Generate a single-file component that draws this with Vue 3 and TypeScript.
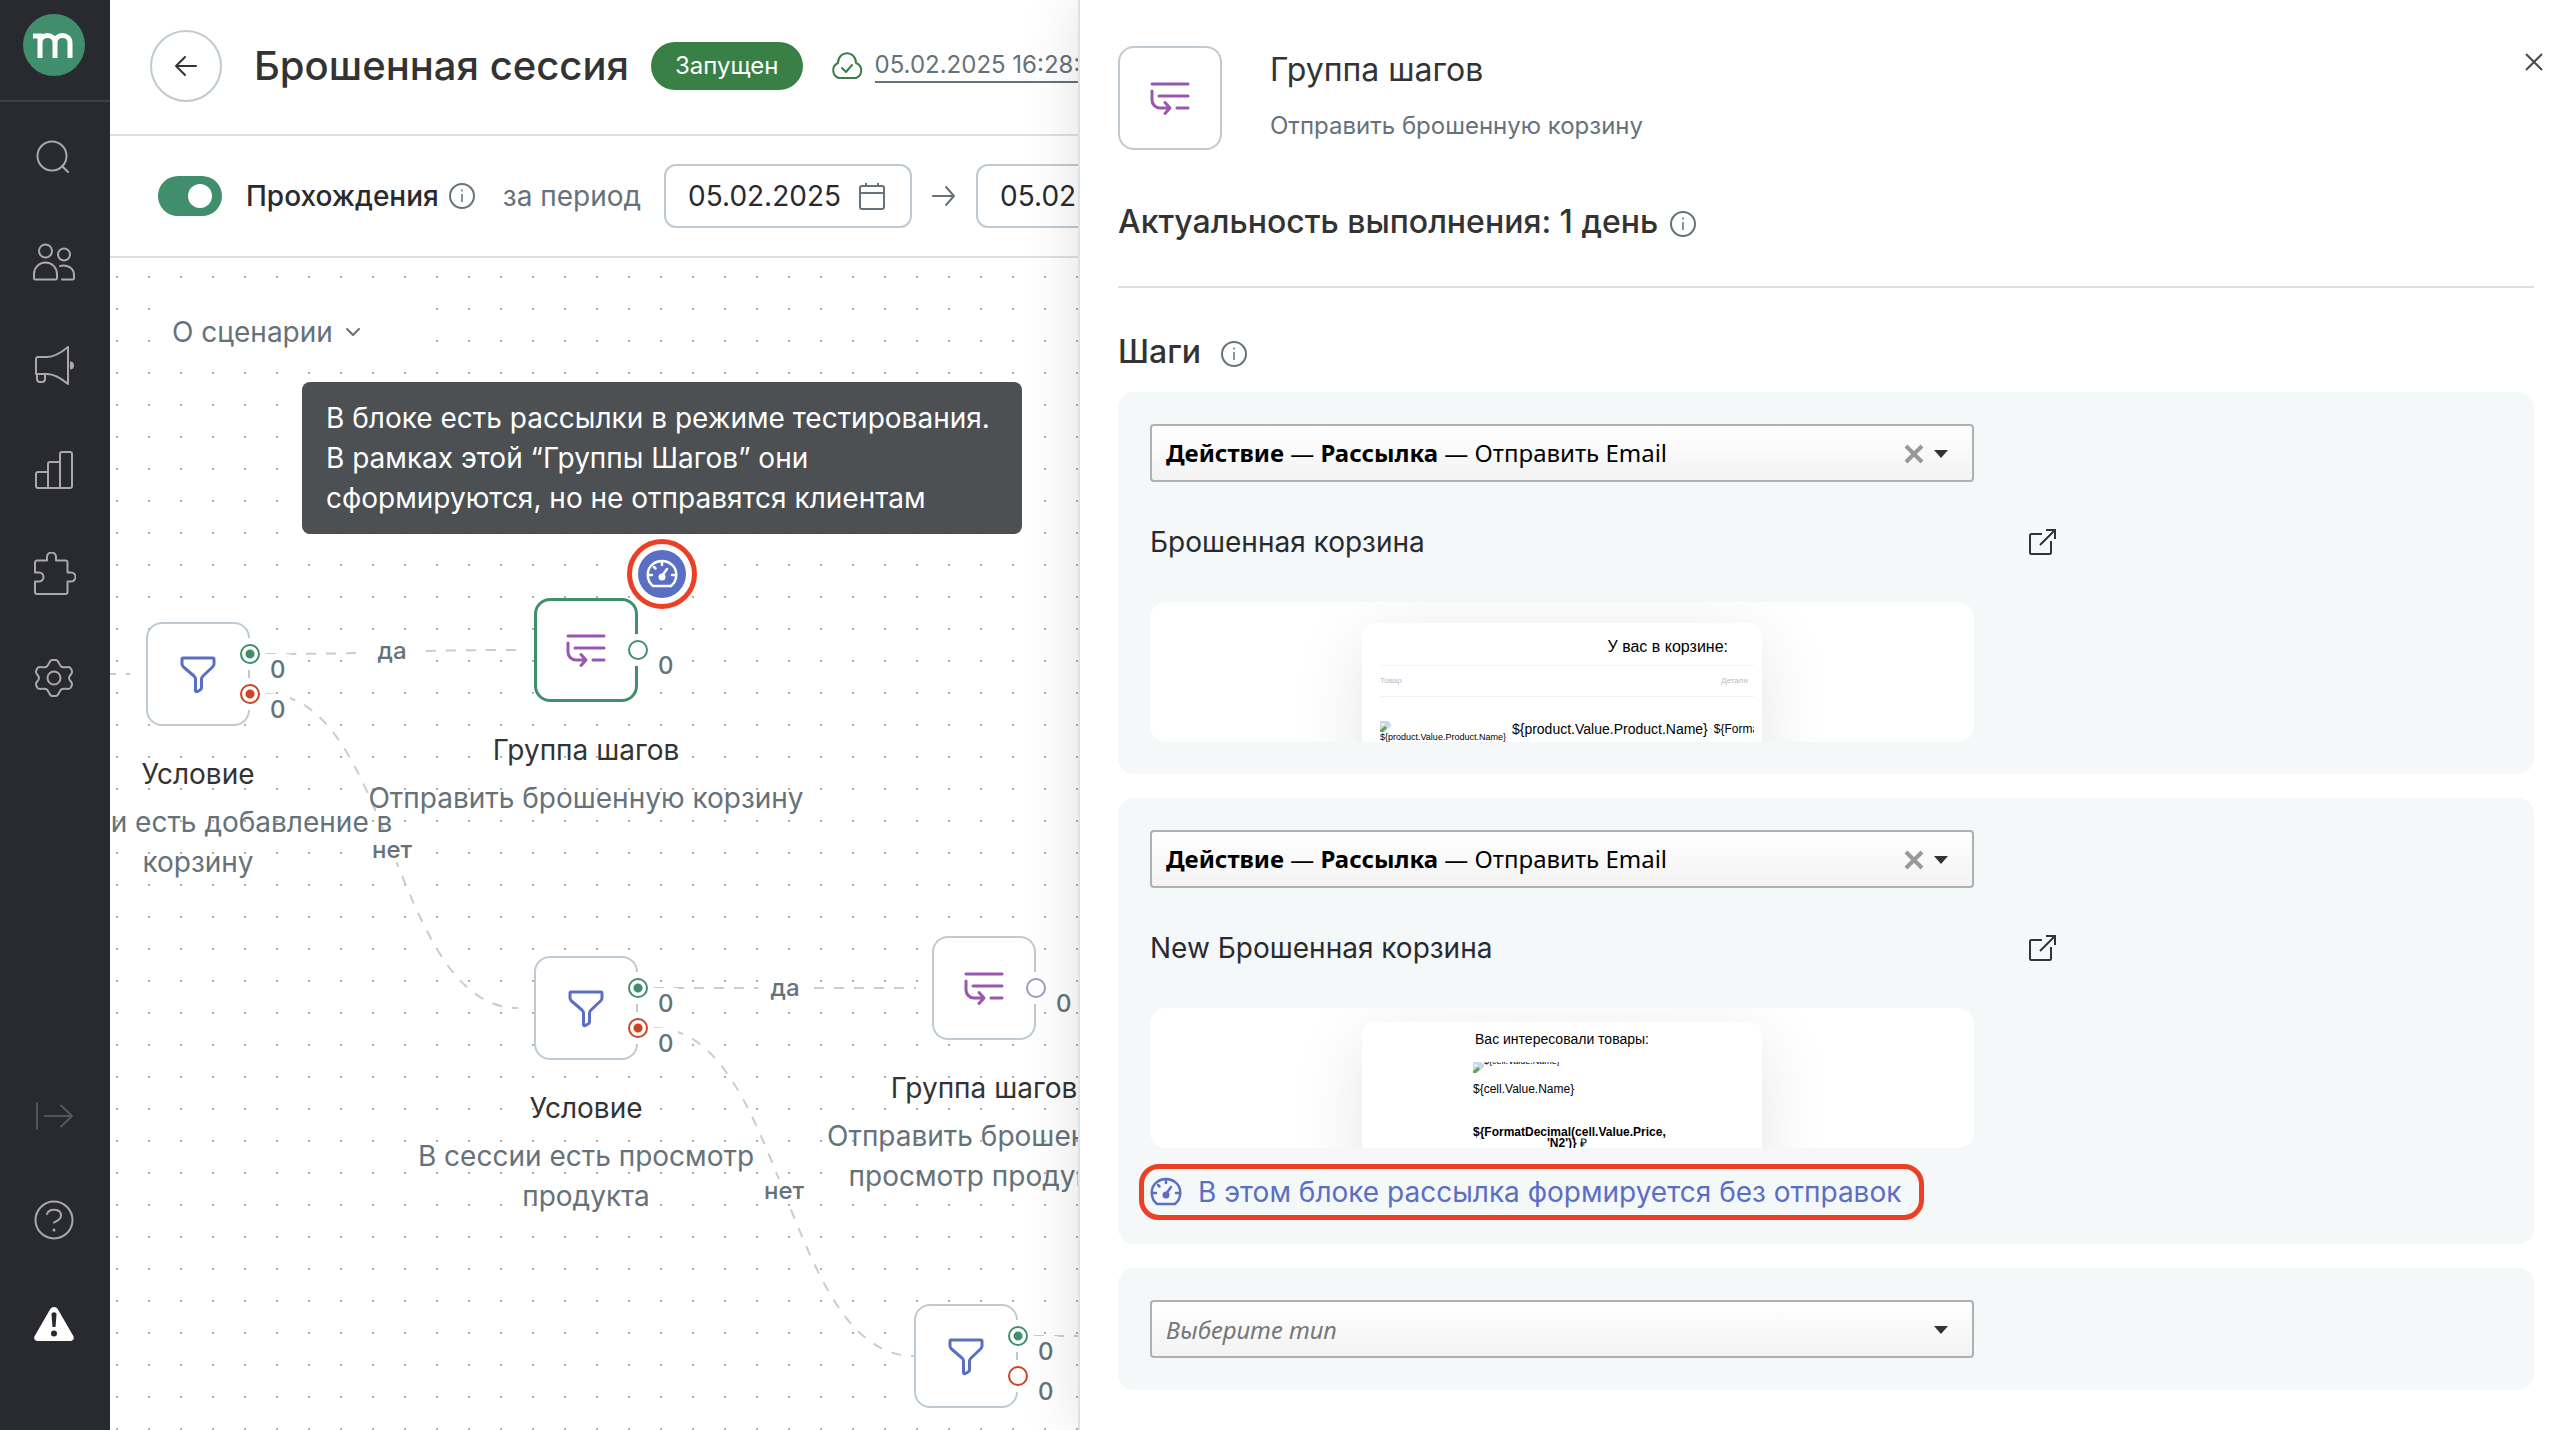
<script setup lang="ts">
import { ref } from 'vue'

type Tone = 'yes' | 'no' | 'next' | 'active'

interface Port {
  tone: Tone
  top: number
  linked: boolean
  count: number
}

interface FlowNode {
  id: string
  x: number
  y: number
  icon: 'funnel' | 'steps'
  title: string
  note: string
  active?: boolean
  ports: Port[]
}

interface EdgeLabel {
  x: number
  y: number
  text: string
}

interface NavItem {
  icon: string
  label: string
}

const nav: NavItem[] = [
  { icon: 'search', label: 'Поиск' },
  { icon: 'users', label: 'Клиенты' },
  { icon: 'megaphone', label: 'Кампании' },
  { icon: 'chart', label: 'Отчёты' },
  { icon: 'puzzle', label: 'Интеграции' },
  { icon: 'gear', label: 'Настройки' },
]

const navBottom: NavItem[] = [
  { icon: 'expand', label: 'Развернуть меню' },
  { icon: 'help', label: 'Помощь' },
  { icon: 'warning', label: 'Предупреждения' },
]

const nodes: FlowNode[] = [
  {
    id: 'cond-cart', x: 36, y: 364, icon: 'funnel', title: 'Условие',
    note: 'В сессии есть добавление в корзину',
    ports: [
      { tone: 'yes', top: 32, linked: true, count: 0 },
      { tone: 'no', top: 72, linked: true, count: 0 },
    ],
  },
  {
    id: 'group-cart', x: 424, y: 340, icon: 'steps', title: 'Группа шагов', active: true,
    note: 'Отправить брошенную корзину',
    ports: [{ tone: 'active', top: 52, linked: false, count: 0 }],
  },
  {
    id: 'cond-view', x: 424, y: 698, icon: 'funnel', title: 'Условие',
    note: 'В сессии есть просмотр продукта',
    ports: [
      { tone: 'yes', top: 32, linked: true, count: 0 },
      { tone: 'no', top: 72, linked: true, count: 0 },
    ],
  },
  {
    id: 'group-view', x: 822, y: 678, icon: 'steps', title: 'Группа шагов',
    note: 'Отправить брошенный просмотр продукта',
    ports: [{ tone: 'next', top: 52, linked: false, count: 0 }],
  },
  {
    id: 'cond-last', x: 804, y: 1046, icon: 'funnel', title: 'Условие',
    note: '',
    ports: [
      { tone: 'yes', top: 32, linked: true, count: 0 },
      { tone: 'no', top: 72, linked: false, count: 0 },
    ],
  },
]

const edges: string[] = [
  'M-24 416H20',
  'M156 396C282 396 282 392 408 392',
  'M156 436C282 436 282 750 408 750',
  'M544 730H806',
  'M544 770C674 770 674 1098 804 1098',
  'M924 1078H1000',
]

const edgeLabels: EdgeLabel[] = [
  { x: 282, y: 393, text: 'да' },
  { x: 282, y: 592, text: 'нет' },
  { x: 675, y: 730, text: 'да' },
  { x: 674, y: 933, text: 'нет' },
]

const passagesOn = ref(true)
const dateFrom = ref('05.02.2025')
const dateTo = ref('05.02.2025')
</script>

<template>
  <div class="app">
    <svg class="sprite" aria-hidden="true">
      <symbol id="i-search" viewBox="0 0 44 44"><g fill="none" stroke="currentColor" stroke-width="2" stroke-linecap="round"><circle cx="20" cy="20" r="14.5" /><path d="M30 30l6 6" /></g></symbol>
      <symbol id="i-users" viewBox="0 0 44 44"><g fill="none" stroke="currentColor" stroke-width="2" stroke-linejoin="round" stroke-linecap="round"><circle cx="13.500" cy="11" r="6.500" /><circle cx="32" cy="14.500" r="6" /><path d="M2 38v-4a11.500 11.500 0 0 1 23 0v4a1.500 1.500 0 0 1-1.500 1.500H3.500A1.500 1.500 0 0 1 2 38zM28 26c7-2 14 2 14 9v3a1.500 1.500 0 0 1-1.500 1.500H30" /></g></symbol>
      <symbol id="i-megaphone" viewBox="0 0 44 44"><g fill="none" stroke="currentColor" stroke-width="2" stroke-linejoin="round"><path d="M5 13h10c8 0 15-5 21-10v37c-6-5-13-10-21-10H4V14.500zM5 30v5a3 3 0 0 0 3 3h2a3 3 0 0 0 3-3v-5" /></g><path d="M38 17.500a4 4 0 0 1 0 8z" fill="currentColor" /></symbol>
      <symbol id="i-chart" viewBox="0 0 44 44"><path d="M16 40H6a2 2 0 0 1-2-2V26a2 2 0 0 1 2-2h10m0 16V16a2 2 0 0 1 2-2h10M16 40h12m0 0V6a2 2 0 0 1 2-2h8a2 2 0 0 1 2 2v32a2 2 0 0 1-2 2z" fill="none" stroke="currentColor" stroke-width="2" /></symbol>
      <symbol id="i-puzzle" viewBox="0 0 44 44"><path d="M5 8.500h10V5a4.500 4.500 0 0 1 9 0v3.500h9.500a2 2 0 0 1 2 2v10h3.500a4.500 4.500 0 0 1 0 9h-3.500V40a2 2 0 0 1-2 2H5a2 2 0 0 1-2-2V29.500h4a4.500 4.500 0 0 0 0-9H3v-10a2 2 0 0 1 2-2z" fill="none" stroke="currentColor" stroke-width="2" stroke-linejoin="round" /></symbol>
      <symbol id="i-gear" viewBox="0 0 44 44"><g fill="none" stroke="currentColor" stroke-width="2" stroke-linejoin="round"><circle cx="22" cy="22" r="6.500" /><path d="M20 4h4c3 0 3 6 6 7s7-1 8.500 1l1.500 3c1 3-3 4-3 7s4 4 3 7l-1.500 3c-1.500 2-5.500 0-8.500 1s-3 7-6 7h-4c-3 0-3-6-6-7s-7 1-8.500-1L4 29c-1-3 3-4 3-7s-4-4-3-7l1.500-3c1.500-2 5.500 0 8.500-1s3-7 6-7z" /></g></symbol>
      <symbol id="i-expand" viewBox="0 0 44 44"><path d="M5 9v26M13 22h27M29 11.500L40 22 29 32.500" fill="none" stroke="currentColor" stroke-width="2" stroke-linecap="round" stroke-linejoin="round" /></symbol>
      <symbol id="i-help" viewBox="0 0 44 44"><g fill="none" stroke="currentColor" stroke-width="2" stroke-linecap="round"><circle cx="22" cy="22" r="18.500" /><path d="M15 16c2-6 14-6 14 1.500 0 4-4 5.500-7 7" /></g><circle cx="22" cy="32" r="1.500" fill="currentColor" /></symbol>
      <symbol id="i-warning" viewBox="0 0 44 44"><path d="M22 5c2 0 3 1 4 2.500l15 26c2 3 0 5.500-3 5.500H6c-3 0-5-2.500-3-5.500l15-26C19 6 20 5 22 5z" fill="#fff" /><path d="M19.500 12.500c0-3 5-3 5 0l-1 12.500h-3z" fill="#292a2f" /><circle cx="22" cy="31.500" r="3" fill="#292a2f" /></symbol>
      <symbol id="i-info" viewBox="0 0 26 26"><circle cx="13" cy="13" r="12" fill="none" stroke="currentColor" stroke-width="2" /><path d="M13 11v8M13 6.500v2" stroke="currentColor" stroke-width="1.500" /></symbol>
      <symbol id="i-funnel" viewBox="0 0 40 40"><path d="M5 4h30a1 1 0 0 1 1 1v5c0 1-.5 2-1.500 3L25 22c-1 1-1.500 2-1.500 3v9c0 1-.5 1.500-1.500 2l-2.500 1.500c-1 .5-2 0-2-1V25c0-1-.5-2-1.500-3L5.500 13C4.500 12 4 11 4 10V5a1 1 0 0 1 1-1z" fill="none" stroke="#5a6fc4" stroke-width="3" stroke-linejoin="round" /></symbol>
      <symbol id="i-steps" viewBox="0 0 40 40"><path d="M2 6h36M9 18h29M27 30h11M2 13v9a8 8 0 0 0 8 8h10M15 24.500l5 5.500-5 5.500" fill="none" stroke="#9a57b0" stroke-width="3" stroke-linecap="round" stroke-linejoin="round" /></symbol>
      <symbol id="i-gauge" viewBox="0 0 32 32"><path d="M7 28C0 22 0 11 7 6c5-4 13-4 18 0 7 5 7 16 0 22z" fill="none" stroke="currentColor" stroke-width="2.500" stroke-linejoin="round" /><path d="M16 4v3M8 9l1.500 1.500M3 17h3M26 17h3M16 18l5-7" fill="none" stroke="currentColor" stroke-width="2.500" stroke-linecap="round" /><circle cx="16" cy="19" r="3.500" fill="currentColor" /></symbol>
      <symbol id="i-calendar" viewBox="0 0 28 28"><path d="M4 4h20a2 2 0 0 1 2 2v19a2 2 0 0 1-2 2H4a2 2 0 0 1-2-2V6a2 2 0 0 1 2-2zM2 11h24M8 1v3M20 1v3" fill="none" stroke="currentColor" stroke-width="2" /></symbol>
      <symbol id="i-external" viewBox="0 0 28 28"><path d="M14 6H3.500A1.500 1.500 0 0 0 2 7.500v17A1.500 1.500 0 0 0 3.500 26h18a1.500 1.500 0 0 0 1.500-1.500V13M18 2h9v9M27 2L12 17" fill="none" stroke="currentColor" stroke-width="2" /></symbol>
      <symbol id="i-broken" viewBox="0 0 11 11"><path d="M0 0h8l3 3v8H0z" fill="#c9d8f0" /><path d="M1 4c1-2 3-2 4 0z" fill="#fff" /><path d="M0 11V9l5-4 2 2-4 4z" fill="#62a74b" /><path d="M4 11l7-6v6z" fill="#fff" /></symbol>
    </svg>

    <nav class="sidebar" aria-label="Основное меню">
      <a class="logo" href="#" aria-label="Главная">
        <svg viewBox="0 0 62 62" width="62" height="62">
          <circle cx="31" cy="31" r="31" fill="#408e6c" />
          <path d="M10 22h7v22M17 29c0-10 15-10 15 0v15M32 29c0-10 15-10 15 0v15" fill="none" stroke="#fff" stroke-width="5" />
        </svg>
      </a>
      <a v-for="item in nav" :key="item.icon" class="nav-item" href="#" :aria-label="item.label">
        <svg width="44" height="44"><use :href="'#i-' + item.icon" /></svg>
      </a>
      <div class="nav-bottom">
        <a v-for="item in navBottom" :key="item.icon" class="nav-item" :class="item.icon" href="#" :aria-label="item.label">
          <svg width="44" height="44"><use :href="'#i-' + item.icon" /></svg>
        </a>
      </div>
    </nav>

    <main class="workspace">
      <header class="topbar">
        <button class="back" type="button" aria-label="Назад">
          <svg width="24" height="24" viewBox="0 0 24 24"><path d="M22 12H2M11 3l-9 9 9 9" fill="none" stroke="#333" stroke-width="2" stroke-linejoin="round" stroke-linecap="round" /></svg>
        </button>
        <h1>Брошенная сессия</h1>
        <span class="status">Запущен</span>
        <svg class="cloud" width="36" height="28" viewBox="0 0 36 28"><path d="M10 26h17a8 8 0 0 0 0-15c0-13-18-13-18 0a8 8 0 0 0 1 15zM13 16l4 4 6-7" fill="none" stroke="#388045" stroke-width="2" stroke-linejoin="round" stroke-linecap="round" /></svg>
        <a class="saved" href="#">05.02.2025 16:28:15</a>
      </header>

      <div class="filters">
        <input id="passages" v-model="passagesOn" class="toggle" type="checkbox" role="switch" />
        <label class="passages" for="passages">Прохождения</label>
        <svg class="info" width="26" height="26"><use href="#i-info" /></svg>
        <label class="period" for="date-from">за период</label>
        <div class="date">
          <input id="date-from" v-model="dateFrom" type="text" />
          <svg width="28" height="28"><use href="#i-calendar" /></svg>
        </div>
        <svg class="between" width="24" height="24" viewBox="0 0 24 24"><path d="M1 12h21M14 3l8 9-8 9" fill="none" stroke="#65727a" stroke-width="2" stroke-linejoin="round" stroke-linecap="round" /></svg>
        <div class="date">
          <input v-model="dateTo" type="text" aria-label="Конец периода" />
          <svg width="28" height="28"><use href="#i-calendar" /></svg>
        </div>
      </div>

      <section class="canvas" aria-label="Схема сценария">
        <svg class="edges" aria-hidden="true">
          <path v-for="d in edges" :key="d" :d="d" />
        </svg>

        <button class="about" type="button">
          О сценарии
          <svg width="16" height="16" viewBox="0 0 16 16"><path d="M2 5l6 6 6-6" fill="none" stroke="#65727a" stroke-width="2" stroke-linecap="round" stroke-linejoin="round" /></svg>
        </button>

        <article
          v-for="node in nodes"
          :key="node.id"
          class="node"
          :class="{ active: node.active }"
          :style="{ left: node.x + 'px', top: node.y + 'px' }"
        >
          <div class="node-box">
            <svg width="40" height="40"><use :href="'#i-' + node.icon" /></svg>
          </div>
          <template v-for="port in node.ports" :key="port.top">
            <span class="count" :style="{ top: port.top + 'px' }">{{ port.count }}</span>
            <span class="port" :class="[port.tone, { linked: port.linked }]" :style="{ top: port.top + 'px' }"></span>
          </template>
          <div class="node-text">
            <h3>{{ node.title }}</h3>
            <p>{{ node.note }}</p>
          </div>
        </article>

        <span
          v-for="label in edgeLabels"
          :key="label.y"
          class="edge-label"
          :style="{ left: label.x + 'px', top: label.y + 'px' }"
        >{{ label.text }}</span>

        <button class="badge" type="button" aria-describedby="test-mode-tip" aria-label="Режим тестирования">
          <span><svg width="32" height="32"><use href="#i-gauge" /></svg></span>
        </button>
        <div id="test-mode-tip" class="tooltip" role="tooltip">
          В блоке есть рассылки в режиме тестирования.<br />В рамках этой “Группы Шагов” они<br />сформируются, но не отправятся клиентам
        </div>
      </section>
    </main>

    <aside class="panel">
      <header class="panel-head">
        <div class="panel-icon"><svg width="40" height="40"><use href="#i-steps" /></svg></div>
        <div class="panel-title">
          <h2>Группа шагов</h2>
          <p>Отправить брошенную корзину</p>
        </div>
        <button class="close" type="button" aria-label="Закрыть">
          <svg width="18" height="18" viewBox="0 0 18 18"><path d="M1 1l16 16M17 1L1 17" stroke="#45494d" stroke-width="2" /></svg>
        </button>
      </header>

      <h2 class="relevance">Актуальность выполнения: 1 день <svg class="info" width="26" height="26"><use href="#i-info" /></svg></h2>
      <hr />
      <h2 class="steps-title">Шаги <svg class="info" width="26" height="26"><use href="#i-info" /></svg></h2>

      <section class="step">
        <div class="picker">
          <select class="rich" aria-label="Тип первого шага">
            <option>Действие — Рассылка — Отправить Email</option>
          </select>
          <span class="picked" aria-hidden="true"><b>Действие</b> — <b>Рассылка</b> — Отправить Email</span>
          <button class="clear" type="button" aria-label="Очистить">
            <svg width="20" height="20" viewBox="0 0 20 20"><path d="M2 2l16 16M18 2L2 18" stroke="#999" stroke-width="4" /></svg>
          </button>
          <svg class="caret" width="14" height="8" viewBox="0 0 14 8"><path d="M0 0h14L7 8z" fill="#333" /></svg>
        </div>
        <div class="mailing">
          <span>Брошенная корзина</span>
          <a href="#" aria-label="Открыть рассылку «Брошенная корзина»"><svg width="28" height="28"><use href="#i-external" /></svg></a>
        </div>
        <div class="preview">
          <div class="letter cart">
            <p class="cart-title">У вас в корзине:</p>
            <div class="cart-head"><span>Товар</span><span>Детали</span></div>
            <div class="cart-row">
              <span class="cart-image">
                <svg width="11" height="11"><use href="#i-broken" /></svg>
                <span>${product.Value.Product.Name}</span>
              </span>
              <span class="cart-name">${product.Value.Product.Name}</span>
              <span class="cart-price">${FormatDecimal}</span>
            </div>
          </div>
        </div>
      </section>

      <section class="step">
        <div class="picker">
          <select class="rich" aria-label="Тип второго шага">
            <option>Действие — Рассылка — Отправить Email</option>
          </select>
          <span class="picked" aria-hidden="true"><b>Действие</b> — <b>Рассылка</b> — Отправить Email</span>
          <button class="clear" type="button" aria-label="Очистить">
            <svg width="20" height="20" viewBox="0 0 20 20"><path d="M2 2l16 16M18 2L2 18" stroke="#999" stroke-width="4" /></svg>
          </button>
          <svg class="caret" width="14" height="8" viewBox="0 0 14 8"><path d="M0 0h14L7 8z" fill="#333" /></svg>
        </div>
        <div class="mailing">
          <span>New Брошенная корзина</span>
          <a href="#" aria-label="Открыть рассылку «New Брошенная корзина»"><svg width="28" height="28"><use href="#i-external" /></svg></a>
        </div>
        <div class="preview viewed-preview">
          <div class="letter viewed">
            <p class="viewed-title">Вас интересовали товары:</p>
            <div class="goods">
              <div class="goods-image">
                <svg width="11" height="11"><use href="#i-broken" /></svg>
                <span>${cell.Value.Name}</span>
              </div>
              <p>${cell.Value.Name}</p>
              <p class="goods-price"><b>${FormatDecimal(cell.Value.Price, 'N2')}</b> ₽</p>
            </div>
          </div>
        </div>
        <p class="notice">
          <svg width="32" height="32"><use href="#i-gauge" /></svg>
          В этом блоке рассылка формируется без отправок
        </p>
      </section>

      <section class="step">
        <div class="picker">
          <select class="empty" aria-label="Тип нового шага">
            <option>Выберите тип</option>
          </select>
          <svg class="caret" width="14" height="8" viewBox="0 0 14 8"><path d="M0 0h14L7 8z" fill="#333" /></svg>
        </div>
      </section>
    </aside>
  </div>
</template>

<style>
body {
  margin: 0;
  background: #fff;
}
</style>

<style scoped>
.app {
  display: flex;
  min-height: 100vh;
  font-family: Inter, "Liberation Sans", sans-serif;
  font-size: 28px;
  line-height: 40px;
  color: #333;
  background: #fff;
}
.app * {
  box-sizing: border-box;
}
h1, h2, h3, p {
  margin: 0;
  font-weight: 400;
}
button {
  padding: 0;
  border: 0;
  background: none;
  font: inherit;
  color: inherit;
  cursor: pointer;
}
svg {
  display: block;
  flex: none;
}
.sprite {
  position: absolute;
  width: 0;
  height: 0;
}

/* Sidebar */
.sidebar {
  display: flex;
  flex-direction: column;
  flex: none;
  width: 110px;
  padding-bottom: 54px;
  background: #292a2f;
}
.logo {
  display: flex;
  justify-content: center;
  height: 102px;
  padding: 14px 2px 0 0;
  margin-bottom: 4px;
  border-bottom: 2px solid #3e3f44;
}
.nav-item {
  display: flex;
  align-items: center;
  justify-content: center;
  height: 104px;
  padding-right: 2px;
  color: #a9a9ac;
}
.nav-item.expand {
  color: #55565a;
}
.nav-bottom {
  margin-top: auto;
}

/* Workspace */
.workspace {
  display: flex;
  flex-direction: column;
  flex: 0 1 968px;
  min-width: 0;
  overflow: hidden;
}
.topbar {
  display: flex;
  align-items: center;
  height: 136px;
  padding: 0 0 2px 40px;
  border-bottom: 2px solid #dbe1e6;
  white-space: nowrap;
}
.topbar > *, .filters > * {
  flex: none;
}
.back {
  display: flex;
  align-items: center;
  justify-content: center;
  width: 72px;
  height: 72px;
  border: 2px solid #bfcad3;
  border-radius: 50%;
}
h1 {
  margin-left: 32px;
  font-size: 40px;
  line-height: 48px;
  font-weight: 500;
}
.status {
  margin-left: 22px;
  padding: 0 24px;
  border-radius: 24px;
  background: #388045;
  color: #fff;
  font-size: 24px;
  line-height: 48px;
}
.cloud {
  margin-left: 26px;
}
.saved {
  margin-left: 10px;
  border-bottom: 2px solid #65727a;
  color: #65727a;
  font-size: 24px;
  line-height: 32px;
  text-decoration: none;
}
.filters {
  display: flex;
  align-items: center;
  height: 122px;
  padding-left: 48px;
  border-bottom: 2px solid #dbe1e6;
  white-space: nowrap;
}
.toggle {
  appearance: none;
  display: flex;
  align-items: center;
  width: 64px;
  height: 40px;
  margin: 0;
  padding: 0 10px;
  border-radius: 20px;
  background: #bfcad3;
}
.toggle::before {
  content: "";
  width: 24px;
  height: 24px;
  border-radius: 50%;
  background: #fff;
}
.toggle:checked {
  justify-content: flex-end;
  background: #408e6c;
}
.passages {
  margin-left: 24px;
  font-weight: 500;
  color: #292a2f;
}
.info {
  color: #65727a;
}
.filters .info {
  margin-left: 10px;
}
.period {
  margin-left: 28px;
  color: #65727a;
}
.period + .date {
  margin-left: 23px;
}
.date {
  display: flex;
  align-items: center;
  justify-content: space-between;
  width: 248px;
  height: 64px;
  padding: 0 24px 0 22px;
  border: 2px solid #bfcad3;
  border-radius: 12px;
  color: #65727a;
}
.date input {
  width: 160px;
  padding: 0;
  border: 0;
  outline: 0;
  background: none;
  font: inherit;
  color: #292a2f;
}
.between {
  margin: 0 20px;
}

/* Canvas */
.canvas {
  position: relative;
  flex: 1 0 1172px;
  overflow: hidden;
  background-image: radial-gradient(circle at 7px 19px, #b0b0b0 1px, transparent 1px);
  background-size: 32px 32px;
}
.edges {
  position: absolute;
  inset: 0;
  width: 100%;
  height: 100%;
}
.edges path {
  fill: none;
  stroke: #c3ced5;
  stroke-width: 2;
  stroke-dasharray: 10 10;
}
.about {
  position: absolute;
  left: 46px;
  top: 46px;
  display: flex;
  align-items: center;
  gap: 12px;
  padding: 8px 64px 8px 16px;
  background: #fff;
  color: #65727a;
}
.node {
  position: absolute;
  width: 104px;
  height: 104px;
}
.node-box, .panel-icon {
  display: flex;
  align-items: center;
  justify-content: center;
  width: 104px;
  height: 104px;
  border: 2px solid #bfcad3;
  border-radius: 16px;
  background: #fff;
}
.node.active .node-box {
  border: 3px solid #408e6c;
}
.port {
  position: absolute;
  left: 104px;
  width: 20px;
  height: 20px;
  margin: -10px;
  border: 2px solid #408e6c;
  border-radius: 50%;
  background-color: #fff;
  box-shadow: 0 0 0 6px #fff;
}
.port.linked {
  background-image: radial-gradient(circle, #408e6c 4px, transparent 5px);
}
.port.no {
  border-color: #cf4321;
}
.port.no.linked {
  background-image: radial-gradient(circle, #cf4321 4px, transparent 5px);
}
.port.next {
  border-color: #9a9fc0;
}
.count {
  position: absolute;
  left: 120px;
  padding: 0 4px;
  background: #fff;
  font-size: 24px;
  line-height: 32px;
  font-weight: 500;
  color: #65727a;
}
.node-text {
  position: absolute;
  top: 132px;
  left: 50%;
  width: 440px;
  margin-left: -220px;
  text-align: center;
}
.node-text h3 {
  margin-bottom: 8px;
  font-size: 28px;
}
.node-text p {
  color: #65727a;
}
.edge-label {
  position: absolute;
  transform: translate(-50%, -50%);
  padding: 0 12px;
  background: linear-gradient(#fff, #fff) center / 100% 24px no-repeat;
  font-size: 24px;
  line-height: 32px;
  font-weight: 500;
  color: #65727a;
}
.badge {
  position: absolute;
  left: 517px;
  top: 281px;
  display: flex;
  align-items: center;
  justify-content: center;
  width: 70px;
  height: 70px;
  border: 5px solid #ec4024;
  border-radius: 50%;
  background: #fff;
}
.badge span {
  display: flex;
  align-items: center;
  justify-content: center;
  width: 48px;
  height: 48px;
  border-radius: 50%;
  background: #5a6fc4;
  color: #fff;
}
.tooltip {
  position: absolute;
  left: 192px;
  top: 124px;
  width: 720px;
  padding: 16px 24px;
  border-radius: 8px;
  background: rgba(61, 65, 68, 0.92);
  color: #fff;
  white-space: nowrap;
}

/* Panel */
.panel {
  position: relative;
  flex: 1;
  min-width: 0;
  padding: 46px 40px 40px 38px;
  border-left: 2px solid #dbe1e6;
  background: #fff;
  box-shadow: 0 0 56px rgba(0, 0, 0, 0.12);
}
.panel h2 {
  font-size: 32px;
}
.panel-head {
  display: flex;
  align-items: flex-start;
}
.panel-title {
  flex: 1;
  padding: 4px 0 0 48px;
}
.panel-title h2 {
  margin-bottom: 20px;
}
.panel-title p {
  font-size: 24px;
  line-height: 32px;
  color: #65727a;
}
.close {
  margin: 7px -9px 0 0;
}
.relevance, .steps-title {
  display: flex;
  align-items: center;
  gap: 12px;
}
.panel .relevance {
  margin-top: 52px;
  font-weight: 500;
}
.panel .steps-title {
  gap: 20px;
  font-weight: 500;
}
.steps-title .info, .relevance .info {
  margin-top: 4px;
}
hr {
  height: 2px;
  margin: 44px 0;
  border: 0;
  background: #dbe1e6;
}
.step {
  margin-top: 24px;
  padding: 32px;
  border-radius: 16px;
  background: #f4f8f9;
}
.steps-title + .step {
  margin-top: 20px;
}
.picker {
  position: relative;
  max-width: 824px;
}
select {
  appearance: none;
  display: block;
  width: 100%;
  height: 58px;
  padding: 0 14px;
  border: 2px solid #b0b0b3;
  border-radius: 4px;
  background: linear-gradient(#fff, #f3f3f3);
  font-family: "Noto Sans", "Open Sans", sans-serif;
  font-size: 24px;
}
select.rich {
  color: transparent;
}
select.rich option {
  color: #000;
}
select.empty {
  color: #777;
  font-style: italic;
}
.picked {
  position: absolute;
  left: 16px;
  top: 9px;
  font-family: "Noto Sans", "Open Sans", sans-serif;
  font-size: 24px;
  color: #000;
  white-space: nowrap;
  pointer-events: none;
}
.clear {
  position: absolute;
  right: 50px;
  top: 20px;
}
.caret {
  position: absolute;
  right: 26px;
  top: 26px;
  pointer-events: none;
}
.mailing {
  display: flex;
  align-items: center;
  justify-content: space-between;
  max-width: 906px;
  margin: 40px 0;
  color: #292a2f;
}
.mailing a {
  color: #333;
}
.preview {
  display: flex;
  justify-content: center;
  max-width: 824px;
  height: 140px;
  padding-top: 21px;
  border-radius: 16px;
  background: #fff;
  overflow: hidden;
}
.viewed-preview {
  padding-top: 14px;
}
.letter {
  flex: none;
  width: 400px;
  height: 240px;
  border-radius: 12px;
  background: #fff;
  box-shadow: 0 16px 72px rgba(0, 0, 0, 0.1);
  color: #000;
  font-family: "Liberation Sans", Arial, sans-serif;
  font-size: 12px;
  line-height: 16px;
}
.cart {
  padding: 14px 8px 0 18px;
}
.cart-title {
  padding-right: 26px;
  font-size: 16px;
  line-height: 20px;
  text-align: right;
}
.cart-head {
  display: flex;
  justify-content: space-between;
  margin-top: 8px;
  padding: 7px 6px 7px 0;
  border-top: 1px solid #f2f2f2;
  border-bottom: 1px solid #f2f2f2;
  color: #bbb;
  font-size: 8px;
}
.cart-row {
  display: flex;
  align-items: flex-start;
  gap: 6px;
  padding-top: 24px;
  overflow: hidden;
  white-space: nowrap;
}
.cart-image {
  display: block;
  flex: none;
  font-size: 9px;
  line-height: 10px;
}
.cart-image span {
  display: block;
}
.cart-name {
  font-size: 14px;
}
.viewed {
  padding-top: 9px;
}
.viewed-title {
  font-size: 14px;
  text-align: center;
}
.goods {
  width: 188px;
  margin: 15px auto 0 111px;
}
.goods-image {
  display: flex;
  height: 19px;
  overflow: hidden;
}
.goods-image span {
  margin-top: -9px;
  font-size: 9px;
}
.goods-price {
  margin-top: 30px;
  line-height: 11px;
  text-align: center;
}
.notice {
  display: inline-flex;
  align-items: center;
  gap: 16px;
  height: 56px;
  margin: 16px 0 -8px -11px;
  padding: 0 18px 0 6px;
  border: 5px solid #ec4024;
  border-radius: 20px;
  color: #5a6fc4;
  vertical-align: top;
}
</style>
